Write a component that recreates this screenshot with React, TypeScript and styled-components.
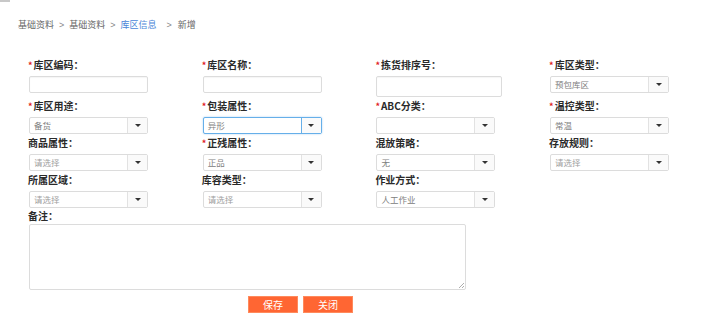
import React from "react";
import styled, { createGlobalStyle, css } from "styled-components";

const Global = createGlobalStyle`
  html, body { margin: 0; padding: 0; background: #fff; }
  body { font-family: "Noto Sans CJK SC", "Noto Sans", sans-serif; color: #333; }
  * { box-sizing: border-box; }
`;

const Page = styled.div`
  width: 726px;
  height: 323px;
  position: relative;
  overflow: hidden;
`;

const CornerMark = styled.div`
  position: absolute;
  left: 0;
  top: 0;
  width: 10px;
  height: 2px;
  background: #c8c8c8;
`;

const Breadcrumb = styled.nav`
  display: flex;
  align-items: center;
  height: 14px;
  margin-top: 18px;
  padding-left: 18px;
  font-size: 9px;
  line-height: 14px;
  color: #666;
`;

const Crumb = styled.span<{ $active?: boolean }>`
  color: ${(p) => (p.$active ? "#4a86d8" : "#666")};
`;

const Sep = styled.span<{ $wide?: boolean }>`
  margin: 0 ${(p) => (p.$wide ? "6px 0 10px" : "5px")};
  color: #888;
  font-family: "Liberation Sans", sans-serif;
`;

const Form = styled.div`
  margin-top: 26px;
  padding-left: 29px;
`;

const Grid = styled.div`
  display: grid;
  grid-template-columns: repeat(4, 173.7px);
  row-gap: 2px;
  align-items: start;
`;

const Field = styled.div`
  display: flex;
  flex-direction: column;
`;

const Label = styled.label`
  display: block;
  height: 14px;
  line-height: 14px;
  font-size: 10px;
  font-weight: 700;
  color: #2a2a2a;
  margin-left: -1px;
  margin-bottom: 4px;
  white-space: nowrap;
`;

const Star = styled.span`
  color: #e02020;
  font-size: 9px;
  margin-right: 1px;
`;

const TextInput = styled.div<{ $tall?: boolean }>`
  width: ${(p) => (p.$tall ? "126px" : "119px")};
  height: ${(p) => (p.$tall ? "21px" : "17px")};
  border: 1px solid #dcdcdc;
  border-radius: 2px;
  background: #fff;
  box-shadow: inset 0 1px 1px rgba(0, 0, 0, 0.04);
`;

const SelectBox = styled.div<{ $focus?: boolean }>`
  display: flex;
  width: 119px;
  height: 17px;
  border: 1px solid #dcdcdc;
  border-radius: 2px;
  background: #fff;
  ${(p) =>
    p.$focus &&
    css`
      border-color: #66afe9;
      box-shadow: 0 0 2px rgba(102, 175, 233, 0.6);
    `}
`;

const SelectValue = styled.div<{ $placeholder?: boolean }>`
  flex: 1;
  padding-left: 4px;
  font-size: 8.5px;
  line-height: 15px;
  color: ${(p) => (p.$placeholder ? "#a0a0a0" : "#808080")};
  white-space: nowrap;
  overflow: hidden;
`;

const Caret = styled.div<{ $focus?: boolean }>`
  width: 20px;
  display: flex;
  align-items: center;
  justify-content: center;
  border-left: 1px solid ${(p) => (p.$focus ? "#66afe9" : "#e2e2e2")};
  background: #fafafa;
  &::after {
    content: "";
    border-top: 3px solid #333;
    border-left: 3px solid transparent;
    border-right: 3px solid transparent;
  }
`;

const RemarkLabel = styled(Label)`
  margin-top: 1px;
  margin-bottom: 1px;
`;

const TextArea = styled.div`
  position: relative;
  width: 437px;
  height: 66px;
  border: 1px solid #dcdcdc;
  border-radius: 2px;
  background: #fff;
`;

const Grip = styled.svg`
  position: absolute;
  right: 1px;
  bottom: 1px;
`;

const Actions = styled.div`
  display: flex;
  gap: 5px;
  margin-top: 6px;
  padding-left: 219px;
`;

const Button = styled.button`
  width: 50px;
  height: 17px;
  padding: 0;
  border: 1px solid #ff8a5c;
  background: #ff6633;
  color: #fff;
  font-family: "Noto Sans CJK SC", sans-serif;
  font-size: 10px;
  line-height: 15px;
  cursor: pointer;
`;

type FieldDef = {
  label: string;
  required?: boolean;
  kind: "input" | "tall" | "select";
  value?: string;
  focus?: boolean;
};

const fields: FieldDef[] = [
  { label: "库区编码：", required: true, kind: "input" },
  { label: "库区名称：", required: true, kind: "input" },
  { label: "拣货排序号：", required: true, kind: "tall" },
  { label: "库区类型：", required: true, kind: "select", value: "预包库区" },
  { label: "库区用途：", required: true, kind: "select", value: "备货" },
  { label: "包装属性：", required: true, kind: "select", value: "异形", focus: true },
  { label: "ABC分类：", required: true, kind: "select", value: "" },
  { label: "温控类型：", required: true, kind: "select", value: "常温" },
  { label: "商品属性：", kind: "select", value: "请选择" },
  { label: "正残属性：", required: true, kind: "select", value: "正品" },
  { label: "混放策略：", kind: "select", value: "无" },
  { label: "存放规则：", kind: "select", value: "请选择" },
  { label: "所属区域：", kind: "select", value: "请选择" },
  { label: "库容类型：", kind: "select", value: "请选择" },
  { label: "作业方式：", kind: "select", value: "人工作业" },
];

export default function App() {
  return (
    <Page>
      <Global />
      <CornerMark />
      <Breadcrumb>
        <Crumb>基础资料</Crumb>
        <Sep>&gt;</Sep>
        <Crumb>基础资料</Crumb>
        <Sep>&gt;</Sep>
        <Crumb $active>库区信息</Crumb>
        <Sep $wide>&gt;</Sep>
        <Crumb>新增</Crumb>
      </Breadcrumb>
      <Form>
        <Grid>
          {fields.map((f) => (
            <Field key={f.label}>
              <Label>
                {f.required && <Star>*</Star>}
                {f.label}
              </Label>
              {f.kind === "select" ? (
                <SelectBox $focus={f.focus}>
                  <SelectValue $placeholder={f.value === "请选择"}>{f.value}</SelectValue>
                  <Caret $focus={f.focus} />
                </SelectBox>
              ) : (
                <TextInput $tall={f.kind === "tall"} />
              )}
            </Field>
          ))}
        </Grid>
        <RemarkLabel>备注：</RemarkLabel>
        <TextArea>
          <Grip width="6" height="6" viewBox="0 0 6 6">
            <path d="M6 1 L1 6 M6 4 L4 6" stroke="#999" strokeWidth="0.8" />
          </Grip>
        </TextArea>
        <Actions>
          <Button>保存</Button>
          <Button>关闭</Button>
        </Actions>
      </Form>
    </Page>
  );
}
